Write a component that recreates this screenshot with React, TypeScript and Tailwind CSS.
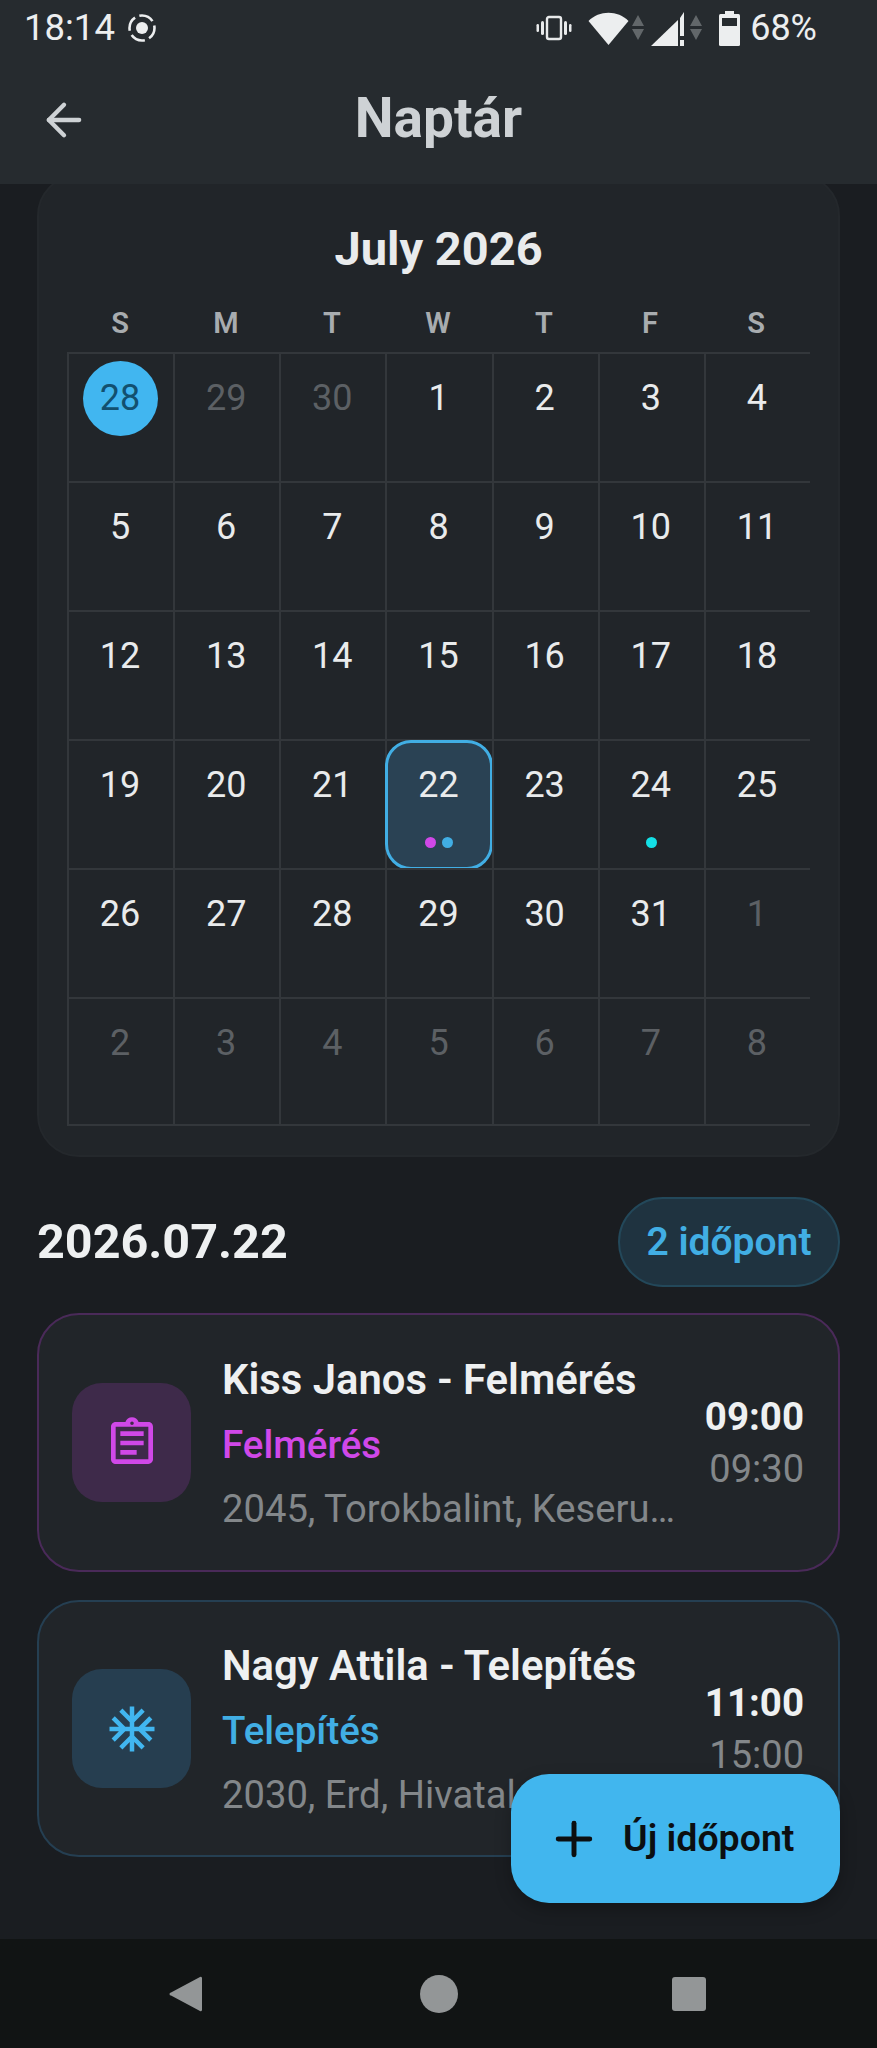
import React from "react";
import { ArrowLeft, Plus } from "lucide-react";
import { MdAcUnit, MdOutlineAssignment } from "react-icons/md";

const rows: [string, boolean][][] = [
  [["28", false], ["29", true], ["30", true], ["1", false], ["2", false], ["3", false], ["4", false]],
  [["5", false], ["6", false], ["7", false], ["8", false], ["9", false], ["10", false], ["11", false]],
  [["12", false], ["13", false], ["14", false], ["15", false], ["16", false], ["17", false], ["18", false]],
  [["19", false], ["20", false], ["21", false], ["22", false], ["23", false], ["24", false], ["25", false]],
  [["26", false], ["27", false], ["28", false], ["29", false], ["30", false], ["31", false], ["1", true]],
  [["2", true], ["3", true], ["4", true], ["5", true], ["6", true], ["7", true], ["8", true]],
];

function StatusIcons() {
  return (
    <div className="flex items-center">
      <svg width="36" height="26" viewBox="0 0 36 26" fill="none" className="mr-[16px]">
        <rect x="11" y="2" width="14" height="22" rx="2" stroke="#e8eaeb" strokeWidth="2.4" />
        <rect x="5" y="6" width="3" height="14" rx="1.5" fill="#e8eaeb" />
        <rect x="28" y="6" width="3" height="14" rx="1.5" fill="#e8eaeb" />
        <rect x="0.5" y="9" width="2.5" height="8" rx="1.2" fill="#e8eaeb" />
        <rect x="33" y="9" width="2.5" height="8" rx="1.2" fill="#e8eaeb" />
      </svg>
      <svg width="60" height="36" viewBox="0 0 60 36">
        <path d="M20.5 35 L0.5 11 C11 0 30 0 40.5 11 Z" fill="#eceeef" />
        <path d="M50 5 L56 16 H44 Z M50 30 L56 19 H44 Z" fill="#62676a" />
      </svg>
      <svg width="53" height="36" viewBox="0 0 53 36" className="ml-[3px]">
        <path d="M0 36 L27 10 V36 Z" fill="#eceeef" />
        <path d="M29 8 L33 2 V26 H29 Z" fill="#eceeef" />
        <rect x="29" y="30" width="4" height="6" fill="#eceeef" />
        <path d="M45 5 L51 16 H39 Z M45 30 L51 19 H39 Z" fill="#62676a" />
      </svg>
      <svg width="21" height="36" viewBox="0 0 21 36" className="ml-[15px]">
        <rect x="6" y="1" width="9" height="5" fill="#eceeef" />
        <rect x="0" y="4" width="21" height="32" rx="1.5" fill="#eceeef" />
        <rect x="3" y="8" width="15" height="8" fill="#262b2f" />
      </svg>
      <span className="ml-[10px] text-[36px] leading-none text-[#eceeef]">68%</span>
    </div>
  );
}

function Cell({ label, muted, col, row }: { label: string; muted: boolean; col: number; row: number }) {
  const isToday = row === 0 && col === 0;
  const selected = row === 3 && col === 3;
  const hasCyan = row === 3 && col === 5;
  return (
    <div
      className={`relative h-[129px] border-t-2 border-l-2 border-[#33373b] pt-[6px] pr-[2px] ${row === 5 ? "border-b-2" : ""}`}
    >
      {selected && (
        <div className="absolute -left-[2px] -right-[1px] top-[-1px] bottom-[-2px] rounded-[26px] border-[3px] border-[#41aee4] bg-[#2a4254]" />
      )}
      <div className="relative flex h-[76px] items-center justify-center">
        {isToday ? (
          <div className="flex size-[75px] items-center justify-center rounded-full bg-[#41b6f0] text-[#12506f]">
            <span className="text-[36px] leading-none">{label}</span>
          </div>
        ) : (
          <span className={`text-[36px] leading-none ${muted ? "text-[#5c6064]" : "text-[#e9ebec]"}`}>{label}</span>
        )}
      </div>
      {selected && (
        <div className="absolute inset-x-0 top-[96px] flex justify-center gap-[6px]">
          <span className="size-[11px] rounded-full bg-[#d048e8]" />
          <span className="size-[11px] rounded-full bg-[#41aee4]" />
        </div>
      )}
      {hasCyan && (
        <div className="absolute inset-x-0 top-[96px] flex justify-center">
          <span className="size-[11px] rounded-full bg-[#14e0e6]" />
        </div>
      )}
    </div>
  );
}

function EventCard({
  title, kind, addr, from, to, accent, border, iconBg, icon, height,
}: {
  title: string; kind: string; addr: string; from: string; to: string; accent: string; border: string; iconBg: string; icon: React.ReactNode; height: string;
}) {
  return (
    <div className={`flex items-center rounded-[42px] border-2 bg-[#212529] pl-[33px] pr-[34px] ${height} ${border}`}>
      <div className={`flex size-[119px] shrink-0 items-center justify-center rounded-[30px] ${iconBg}`}>{icon}</div>
      <div className="ml-[31px] flex min-w-0 flex-1 flex-col pt-[2px]">
        <div className="text-[41.8px] leading-[52px] font-semibold whitespace-nowrap text-[#eef0f1]">{title}</div>
        <div className={`mt-[14px] text-[38.5px] leading-[50px] font-medium ${accent}`}>{kind}</div>
        <div className="mt-[14px] text-[38.2px] leading-[50px] whitespace-nowrap text-[#83878a]">{addr}</div>
      </div>
      <div className="ml-[22px] flex shrink-0 flex-col items-end">
        <div className="text-[38.5px] leading-[50px] font-bold text-[#eef0f1]">{from}</div>
        <div className="mt-[2px] text-[38px] leading-[50px] text-[#83878a]">{to}</div>
      </div>
    </div>
  );
}

export default function App() {
  return (
    <div className="relative flex h-[2048px] w-[877px] flex-col overflow-hidden bg-[#1a1d21] font-[Roboto,sans-serif]">
      <header className="relative z-10 h-[184px] shrink-0 bg-[#262b2f]">
        <div className="flex h-[56px] items-center justify-between pl-[24px] pr-[60px]">
          <div className="flex items-center gap-[12px]">
            <span className="text-[36.5px] leading-none text-[#eceeef]">18:14</span>
            <svg width="30" height="30" viewBox="0 0 30 30" fill="none">
              <circle cx="15" cy="15" r="6" fill="#eceeef" />
              <circle cx="15" cy="15" r="12.5" stroke="#eceeef" strokeWidth="2.6" strokeDasharray="15 4.6" strokeDashoffset="3" />
            </svg>
          </div>
          <StatusIcons />
        </div>
        <div className="relative flex h-[128px] items-center justify-center pb-[4px]">
          <ArrowLeft className="absolute left-[38px] top-[38px] size-[52px] text-[#ced2d5]" strokeWidth={2} />
          <span className="text-[55px] leading-none font-bold text-[#ced2d5]">Naptár</span>
        </div>
      </header>

      <main className="flex-1 px-[37px]">
        <section className="mt-[-10px] h-[983px] rounded-[42px] border-2 border-[#24282c] bg-[#212529] px-[28px]">
          <div className="mt-[44px] text-center text-[47px] leading-[58px] font-bold text-[#e9ebec]">July 2026</div>
          <div className="mt-[25px] grid w-[743px] grid-cols-7 pr-[1px] text-center text-[29px] leading-[40px] font-semibold text-[#a8acaf]">
            {["S", "M", "T", "W", "T", "F", "S"].map((d, i) => (
              <div key={i}>{d}</div>
            ))}
          </div>
          <div className="mt-[9px] grid w-[743px] grid-cols-7">
            {rows.map((r, ri) =>
              r.map(([label, muted], ci) => (
                <Cell key={`${ri}-${ci}`} label={label} muted={muted} col={ci} row={ri} />
              )),
            )}
          </div>
        </section>

        <div className="mt-[40px] flex h-[90px] items-center justify-between">
          <span className="text-[48.5px] leading-none font-bold text-[#eef0f1]">2026.07.22</span>
          <span className="flex h-[90px] w-[222px] items-center justify-center rounded-full border-2 border-[#23485a] bg-[#1f3340] text-[39px] font-semibold text-[#41aee4]">
            2 időpont
          </span>
        </div>

        <div className="mt-[26px] flex flex-col gap-[28px]">
          <EventCard
            title="Kiss Janos - Felmérés"
            kind="Felmérés"
            addr="2045, Torokbalint, Keseru…"
            from="09:00"
            to="09:30"
            accent="text-[#d048e8]"
            border="border-[#4a2a59]"
            iconBg="bg-[#3e2a4a]"
            height="h-[259px]"
            icon={<MdOutlineAssignment className="size-[56px] text-[#d048e8]" />}
          />
          <EventCard
            title="Nagy Attila - Telepítés"
            kind="Telepítés"
            addr="2030, Erd, Hivatal utca 5"
            from="11:00"
            to="15:00"
            accent="text-[#41aee4]"
            border="border-[#253f52]"
            iconBg="bg-[#263e50]"
            height="h-[257px]"
            icon={<MdAcUnit className="size-[54px] text-[#41b6f0]" />}
          />
        </div>
      </main>

      <div className="absolute left-[511px] top-[1774px] z-10 flex h-[129px] w-[329px] items-center rounded-[38px] bg-[#41b6ee] pl-[36px] shadow-[0_6px_16px_rgba(0,0,0,0.25)]">
        <Plus className="size-[54px] text-[#0c0f11]" strokeWidth={2.2} />
        <span className="ml-[22px] text-[37.5px] font-semibold whitespace-nowrap text-[#0c0f11]">Új időpont</span>
      </div>

      <nav className="flex h-[109px] shrink-0 items-center bg-[#111414] pl-[168px]">
        <svg width="36" height="38" viewBox="0 0 36 38"><path d="M34 3 V35 A1.5 1.5 0 0 1 32 36 L3 20.5 A1.5 1.5 0 0 1 3 17.5 L32 2 A1.5 1.5 0 0 1 34 3 Z" fill="#939697" /></svg>
        <svg width="38" height="38" viewBox="0 0 38 38" className="ml-[216px]"><circle cx="19" cy="19" r="19" fill="#939697" /></svg>
        <svg width="36" height="36" viewBox="0 0 36 36" className="ml-[213px]"><rect width="34" height="34" x="1" y="1" rx="3" fill="#939697" /></svg>
      </nav>
    </div>
  );
}
